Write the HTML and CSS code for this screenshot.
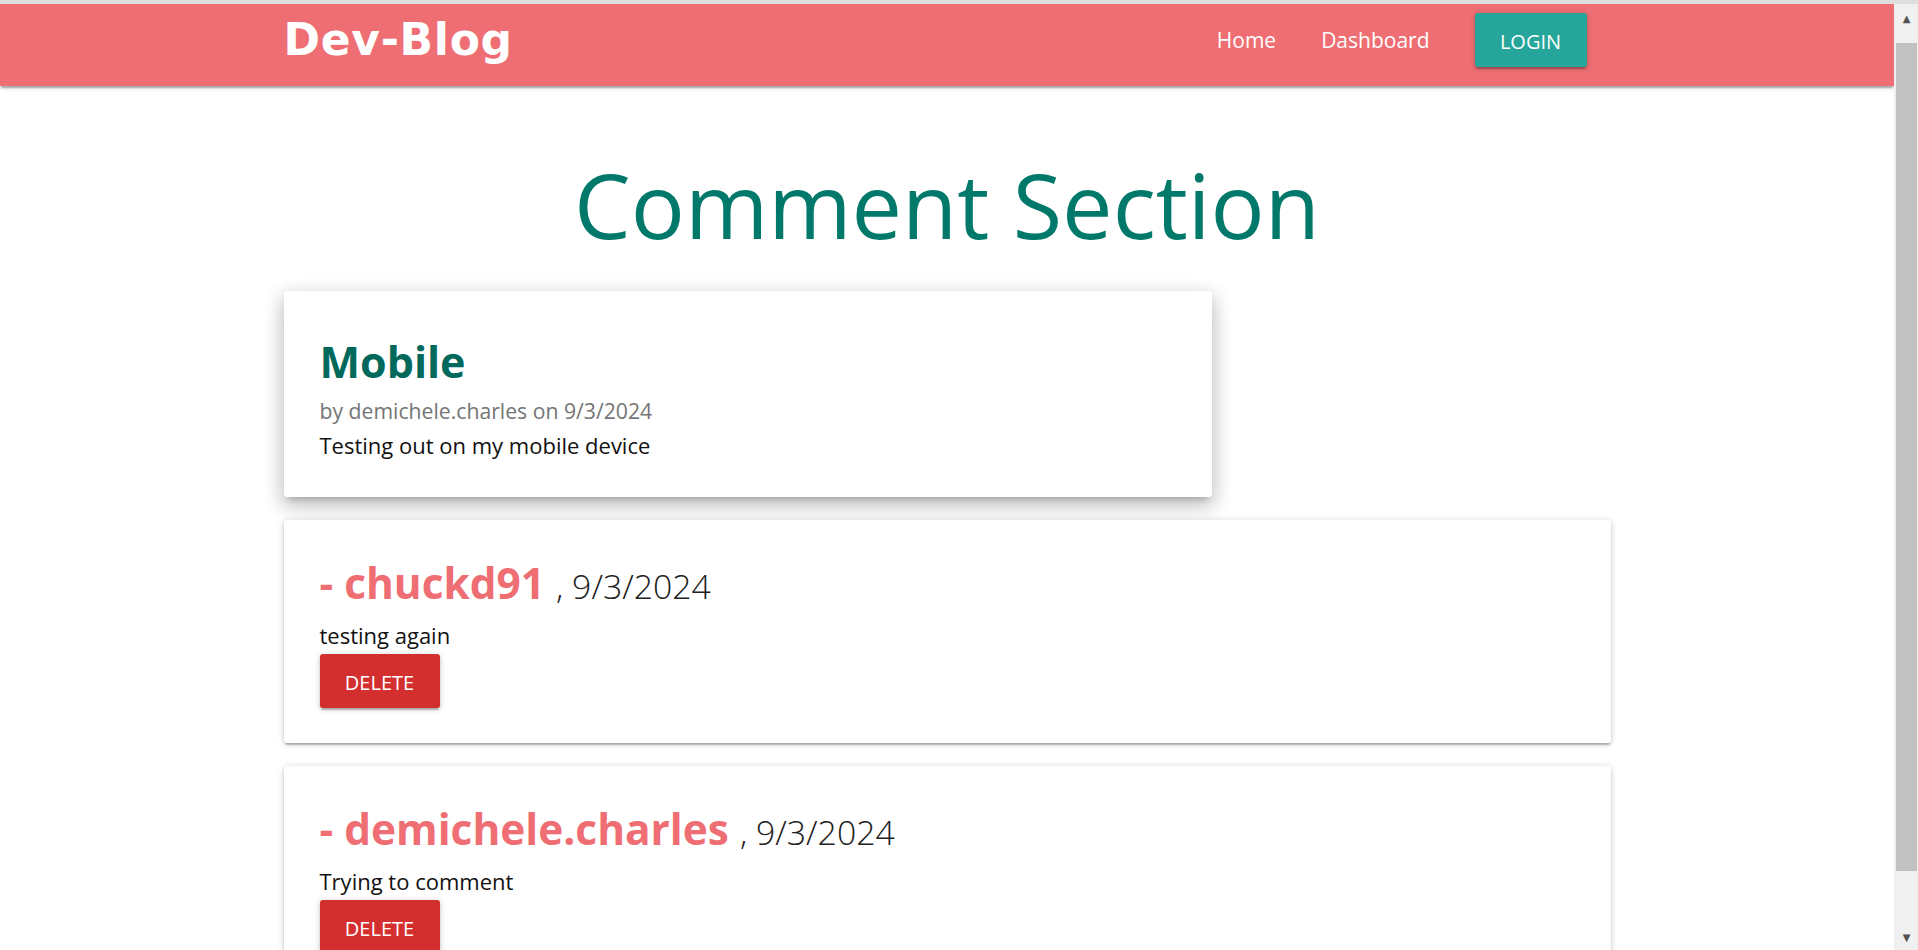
FILE: index.html
```html
<!DOCTYPE html>
<html lang="en">
<head>
<meta charset="utf-8">
<title>Dev-Blog</title>
<link rel="stylesheet" href="styles.css">
</head>
<body>
<div class="frame">
  <div class="page">
    <header class="nav">
      <div class="container nav-inner">
        <a class="brand" href="#">Dev-Blog</a>
        <ul class="nav-links">
          <li><a class="nav-link" href="#">Home</a></li>
          <li><a class="nav-link" href="#">Dashboard</a></li>
          <li><a class="btn btn-login" href="#">Login</a></li>
        </ul>
      </div>
    </header>
    <main class="container main">
      <h1 class="page-title">Comment Section</h1>
      <article class="card post-card">
        <h2 class="post-title">Mobile</h2>
        <p class="post-meta">by demichele.charles on 9/3/2024</p>
        <p class="post-body">Testing out on my mobile device</p>
      </article>
      <article class="card comment-card">
        <h4 class="comment-head">- chuckd91 <span class="comment-date">, 9/3/2024</span></h4>
        <p class="comment-body">testing again</p>
        <button class="btn btn-delete">Delete</button>
      </article>
      <article class="card comment-card">
        <h4 class="comment-head">- demichele.charles <span class="comment-date">, 9/3/2024</span></h4>
        <p class="comment-body">Trying to comment</p>
        <button class="btn btn-delete">Delete</button>
      </article>
    </main>
  </div>
  <div class="scrollbar">
    <div class="sb-arrow sb-up">▲</div>
    <div class="sb-thumb"></div>
    <div class="sb-arrow sb-down">▼</div>
  </div>
</div>
</body>
</html>
```

FILE: styles.css
```css
html, body {
  margin: 0;
  padding: 0;
  height: 100%;
  overflow: hidden;
  background: #ffffff;
}

body {
  font-family: "Open Sans", "Noto Sans", sans-serif;
  color: #212121;
}

.frame {
  display: flex;
  height: 950px;
  box-sizing: border-box;
  border-top: 4px solid #dedede;
}

.page {
  flex: 1;
  min-width: 0;
  overflow: hidden;
  background: #fff;
}

.container {
  width: 1327px;
  margin: 0 auto;
}

/* NAV */
.nav {
  height: 82px;
  background: #ee6e73;
  box-shadow: 0 2px 2px 0 rgba(0,0,0,0.14), 0 4px 1px -2px rgba(0,0,0,0.12), 0 1px 6px 0 rgba(0,0,0,0.2);
  position: relative;
  z-index: 2;
}

.nav-inner {
  display: flex;
  justify-content: space-between;
  align-items: flex-start;
  height: 82px;
}

.brand {
  font-family: "DejaVu Sans", sans-serif;
  font-weight: 700;
  font-size: 44px;
  line-height: 72px;
  color: #ffffff;
  text-decoration: none;
  letter-spacing: 0.7px;
}

.nav-links {
  list-style: none;
  margin: 0 24px 0 0;
  padding: 0;
  display: flex;
  align-items: flex-start;
  gap: 45px;
}

.nav-link {
  display: block;
  font-size: 21px;
  line-height: 72px;
  color: #ffffff;
  text-decoration: none;
}

.btn {
  display: inline-block;
  box-sizing: border-box;
  border: none;
  border-radius: 3px;
  color: #ffffff;
  font-family: "Open Sans", "Noto Sans", sans-serif;
  font-size: 20px;
  text-transform: uppercase;
  text-decoration: none;
  text-align: center;
  height: 54px;
  padding: 4px 0 0;
  line-height: 50px;
  box-shadow: 0 2px 2px 0 rgba(0,0,0,0.14), 0 4px 1px -2px rgba(0,0,0,0.12), 0 1px 6px 0 rgba(0,0,0,0.2);
  cursor: pointer;
}

.btn-login {
  background: #26a69a;
  width: 112px;
  margin-top: 9px;
}

.btn-delete {
  background: #d32f2f;
  width: 120px;
  display: block;
  margin-top: 5px;
}

/* MAIN */
.main {
  padding-bottom: 40px;
}

.page-title {
  margin: 68px 0 0;
  font-size: 90px;
  line-height: 100px;
  font-weight: 400;
  color: #00796b;
  text-align: center;
}

.card {
  background: #ffffff;
  border-radius: 3px;
  box-sizing: border-box;
}

.post-card {
  width: 928px;
  margin-top: 37px;
  padding: 46px 36px 38px;
  box-shadow: 0 10px 21px 2px rgba(0,0,0,0.14), 0 4px 18px 2px rgba(0,0,0,0.12), 0 6px 6px -4px rgba(0,0,0,0.2);
}

.post-title {
  margin: 0;
  font-size: 43px;
  line-height: 50px;
  font-weight: 700;
  color: #00695c;
}

.post-meta {
  margin: 10px 0 0;
  font-size: 21.2px;
  line-height: 28px;
  color: #757575;
}

.post-body {
  margin: 6px 0 0;
  font-size: 22px;
  line-height: 28px;
  color: #111111;
}

.comment-card {
  margin-top: 23px;
  padding: 39px 36px 35px;
  box-shadow: 0 2px 2px 0 rgba(0,0,0,0.14), 0 4px 1px -2px rgba(0,0,0,0.12), 0 1px 6px 0 rgba(0,0,0,0.2);
}

.comment-head {
  margin: 0;
  font-size: 42.4px;
  line-height: 48px;
  font-weight: 700;
  color: #ee6e73;
}

.comment-date {
  font-size: 33.8px;
  line-height: 1;
  font-weight: 300;
  color: #212121;
}

.comment-body {
  margin: 14px 0 0;
  font-size: 22px;
  line-height: 28px;
  color: #111111;
}

/* fake window scrollbar */
.scrollbar {
  width: 24px;
  flex: none;
  background: #f0f0f0;
  display: grid;
  grid-template-rows: 28px 839px 1fr;
  padding: 0 1px 0 2px;
  box-sizing: border-box;
}

.sb-arrow {
  font-family: "DejaVu Sans", sans-serif;
  font-size: 10px;
  line-height: 1;
  color: #505050;
  display: flex;
  justify-content: center;
  align-items: center;
}

.sb-up {
  padding-top: 2px;
}

.sb-thumb {
  margin-top: 11px;
  background: #c1c1c1;
}

.sb-down {
  align-items: flex-end;
  padding-bottom: 7px;
}
```
